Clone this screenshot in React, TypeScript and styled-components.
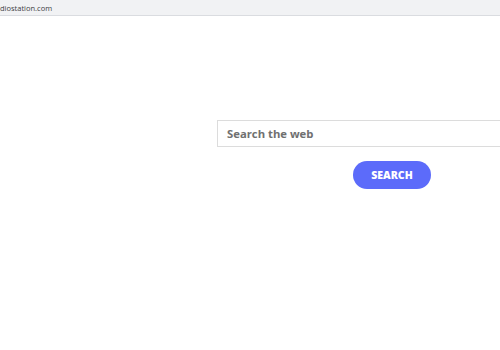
import styled, {createGlobalStyle} from 'styled-components';

const GlobalStyle = createGlobalStyle`
  html, body {
    margin: 0;
    padding: 0;
    background: #ffffff;
    overflow: hidden;
  }
`;

const Page = styled.div`
  width: 500px;
  height: 350px;
  display: flex;
  flex-direction: column;
  overflow: hidden;
  font-family: 'Open Sans', sans-serif;
`;

const AddressBar = styled.div`
  height: 15px;
  background: #f1f2f4;
  border-bottom: 1px solid #dadce0;
  display: flex;
  align-items: center;
  font-family: 'Open Sans', sans-serif;
  font-size: 7.5px;
  color: #3c4043;
`;

const Body = styled.div`
  flex: 1;
  display: flex;
  flex-direction: column;
  padding-top: 104px;
  padding-left: 217px;
  overflow: hidden;
`;

const SearchBox = styled.div`
  width: 300px;
  height: 25px;
  flex-shrink: 0;
  border: 1px solid #dcdcdc;
  display: flex;
  align-items: center;
  padding-left: 9px;
  font-family: 'Open Sans', sans-serif;
  font-weight: 700;
  font-size: 11.3px;
  color: #707070;
`;

const ButtonRow = styled.div`
  display: flex;
  padding-left: 136px;
  margin-top: 14px;
`;

const SearchButton = styled.button`
  width: 78px;
  height: 28px;
  border: none;
  border-radius: 14px;
  background: #5c6bfa;
  color: #ffffff;
  font-family: 'Open Sans', sans-serif;
  font-weight: 800;
  font-size: 10.5px;
  cursor: pointer;
`;

export default function App() {
  return (
    <Page>
      <GlobalStyle />
      <AddressBar>diostation.com</AddressBar>
      <Body>
        <SearchBox>Search the web</SearchBox>
        <ButtonRow>
          <SearchButton>SEARCH</SearchButton>
        </ButtonRow>
      </Body>
    </Page>
  );
}
